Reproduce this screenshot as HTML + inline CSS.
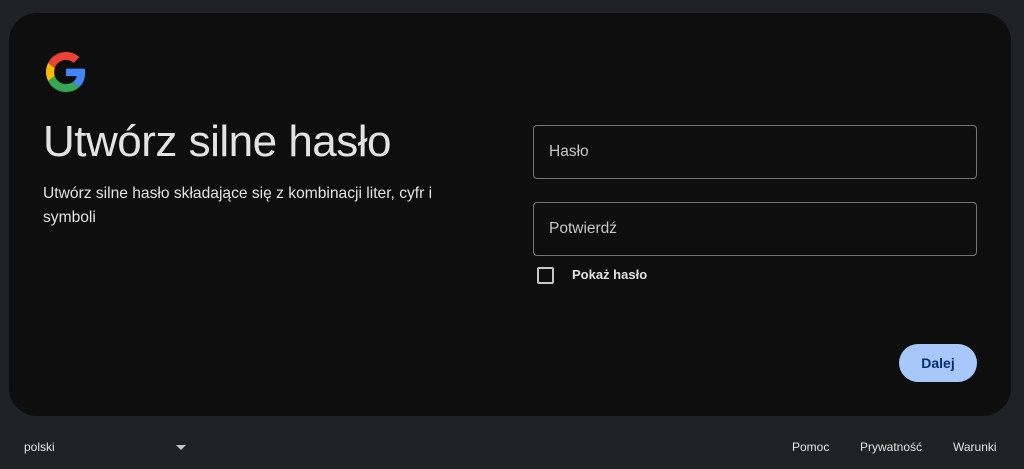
<!DOCTYPE html>
<html><head><meta charset="utf-8"><style>
*{margin:0;padding:0;box-sizing:border-box}
body{width:1024px;height:469px;background:#202124;font-family:"Liberation Sans",sans-serif;position:relative;overflow:hidden;color:#e3e3e3}
.card{position:absolute;left:9px;top:13px;width:1002px;height:403px;background:#0e0e0e;border-radius:28px}
.abs{position:absolute}
h1{position:absolute;left:43px;top:117px;font-size:44px;font-weight:400;color:#e3e3e3;letter-spacing:-0.5px;white-space:nowrap}
.sub{left:43px;top:182px;font-size:15.6px;line-height:24px;color:#e3e3e3;width:430px}
.inp{position:absolute;left:533px;width:444px;height:54px;border:1px solid #757775;border-radius:4px;font-size:15.5px;color:#c4c7c5;padding:17px 0 0 15px}
.cb{left:537px;top:267px;width:17px;height:17px;border:2px solid #c4c7c5;border-radius:2px}
.btn{left:899px;top:344px;width:78px;height:38px;border-radius:19px;background:#a8c7fa;color:#062e6f;font-size:14px;text-align:center;line-height:38px;font-weight:bold}
.f{top:440px;font-size:12px;color:#e3e3e3}
</style></head><body>
<div class="card"></div>
<svg class="abs" style="left:46px;top:52px" width="40" height="40" viewBox="0 0 48 48">
<path fill="#EA4335" d="M24 9.5c3.540 0 6.71 1.22 9.21 3.6l6.85-6.85C35.9 2.38 30.470 0 24 0 14.62 0 6.51 5.38 2.56 13.22l7.98 6.19C12.43 13.72 17.74 9.5 24 9.5z"/>
<path fill="#4285F4" d="M46.98 24.55c0-1.57-.15-3.09-.38-4.55H24v9.020h12.94c-.58 2.96-2.26 5.48-4.78 7.18l7.73 6c4.51-4.18 7.09-10.36 7.09-17.65z"/>
<path fill="#FBBC05" d="M10.53 28.59c-.48-1.45-.76-2.99-.76-4.59s.27-3.14.76-4.59l-7.98-6.19C.92 16.46 0 20.12 0 24c0 3.88.92 7.54 2.56 10.78l7.97-6.19z"/>
<path fill="#34A853" d="M24 48c6.48 0 11.93-2.13 15.89-5.81l-7.73-6c-2.15 1.45-4.92 2.3-8.16 2.3-6.26 0-11.57-4.22-13.47-9.91l-7.98 6.19C6.51 42.62 14.62 48 24 48z"/>
</svg>
<h1>Utwórz silne hasło</h1>
<div class="abs sub">Utwórz silne hasło składające się z kombinacji liter, cyfr i symboli</div>
<div class="inp" style="top:125px">Hasło</div>
<div class="inp" style="top:202px">Potwierdź</div>
<div class="abs cb"></div>
<div class="abs" style="left:572px;top:267px;font-size:13px;font-weight:bold;color:#e3e3e3">Pokaż hasło</div>
<div class="abs btn">Dalej</div>
<div class="abs f" style="left:24px">polski</div>
<svg class="abs" style="left:176px;top:445px" width="10" height="5"><path d="M0 0L5 5L10 0z" fill="#c4c7c5"/></svg>
<div class="abs f" style="left:792px">Pomoc</div>
<div class="abs f" style="left:860px">Prywatność</div>
<div class="abs f" style="left:953px">Warunki</div>
</body></html>
